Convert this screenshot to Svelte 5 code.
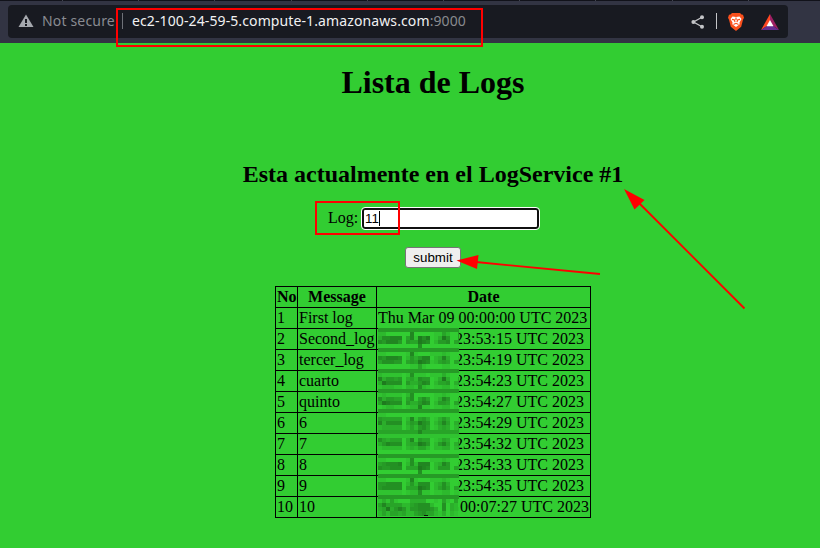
<script>
  const rows = [
    [1, 'First log', 'Thu Mar 09 00:00:00 UTC 2023', 0],
    [2, 'Second_log', '23:53:15 UTC 2023', 77],
    [3, 'tercer_log', '23:54:19 UTC 2023', 77],
    [4, 'cuarto', '23:54:23 UTC 2023', 77],
    [5, 'quinto', '23:54:27 UTC 2023', 77],
    [6, '6', '23:54:29 UTC 2023', 77],
    [7, '7', '23:54:32 UTC 2023', 77],
    [8, '8', '23:54:33 UTC 2023', 77],
    [9, '9', '23:54:35 UTC 2023', 77],
    [10, '10', '00:07:27 UTC 2023', 82]
  ];

  // Shade of every 4px cell in the censored area: 0 is the page green, 9 the darkest.
  const band = '555555555555555555555';
  const a = [band, '220000007000001142005', '366777047186801385005', '657775054487602556045', '000000000060000000000'];
  const b = [band, '110000017100011121000', '657776025357702373001', '466655045487612454044', '000000001141000011000'];
  const c = [band, '211111016111011131000', '735545034265501383004', '386666053357602445035', '122211022162101122010'];
  const blocks = [
    [328, a],
    [348, b],
    [369, c],
    [389, [band, '121111026000001121000', '635544046046401375004', '487666053357602554045', '012211012271101122010']],
    [409, [band, '110000000000000000000', '544444027145301353001', '736666035486502474034', '233333024256401343024']],
    [430, ['444444444474444444444', '111111111111111111111', '643444037154401243004', '357666034487502574035', '122222023244202233023', '000000000000000000000']],
    [454, [band, '110000016000011121000', '456667026277702375002', '655666044487602555044', '000000000060000000000']],
    [474, [band, '110000017100011121000', '556666025266602363001', '566666044487602464044', '111111012261101122011']],
    [495, [band, '131410003333001041040', '474444224566620060320', '348357525566653060321', '242443422456442130210']]
  ];
  const cells = blocks.flatMap(([y, lines]) =>
    lines.flatMap((line, r) => [...line].map((v, i) => ({ x: i * 4, y: y - 328 + r * 4, v: +v })))
  );
  const shade = (v) => `rgb(${50 - v * 2.5},${205 - v * 10.2},${50 - v * 2.5})`;
</script>

<div class="screen">
  <header>
    <div class="tabs"><i></i><i></i><i></i><i></i><i></i><i></i><i></i><i></i><i></i><i></i></div>
    <div class="address">
      <svg class="warn" width="16" height="14" viewBox="0 0 16 14">
        <path d="M8 .5 15.5 13H.5Z" fill="#a5a8ae" />
        <path d="M7 5h2v4H7zM7 10h2v2H7z" fill="#181a21" />
      </svg>
      <span class="insecure">Not secure</span>
      <span class="divider"></span>
      <span class="url">ec2-100-24-59-5.compute-1.amazonaws.com<b>:9000</b></span>
      <svg class="share" width="14" height="14" viewBox="0 0 14 14">
        <path d="M11 2.2 2.5 7 11 11.8" fill="none" stroke="#c4c5c8" stroke-width="1.3" />
        <g fill="#c4c5c8"><circle cx="11" cy="2.3" r="2" /><circle cx="2.4" cy="7" r="2" /><circle cx="11" cy="11.7" r="2" /></g>
      </svg>
      <span class="divider light"></span>
      <svg class="brave" width="16" height="18" viewBox="0 0 16 18">
        <path d="M4 0h8l1.5 1.6L15 1.8l1 3-1 2-1.8 7L8 18l-5.2-4.2L1 6.8l-1-2 1-3 1.5-.2Z" fill="#f9501d" />
        <path d="M4.500 3.500 8 4l3.500-.5L13.500 6l-2 3.500.2 1.800L8 14l-3.700-2.700.2-1.800L2.500 6Z" fill="#fff" />
        <path d="m4 6.300 2.500.7.5 2M12 6.300 9.500 7 9 9M8 4.500v2.500M5.500 11.500 8 10.300l2.500 1.200" fill="none" stroke="#f9501d" stroke-width="1.2" />
      </svg>
      <svg class="bat" width="18" height="16" viewBox="0 0 18 16">
        <path d="M9 0 0 16 9 10Z" fill="#ff4724" />
        <path d="M9 0 18 16 9 10Z" fill="#9e1f63" />
        <path d="M0 16h18L9 10Z" fill="#662d91" />
        <path d="m9 6 3.500 6.300h-7Z" fill="#fff" />
      </svg>
    </div>
  </header>

  <main>
    <h1>Lista de Logs</h1>
    <br />
    <h2>Esta actualmente en el LogService #1</h2>
    <form onsubmit={(e) => e.preventDefault()}>
      <div class="field">
        <label for="log">Log:</label>
        <div class="input" id="log" role="textbox" tabindex="-1">11<i></i></div>
      </div>
      <button>submit</button>
    </form>
    <table>
      <colgroup><col class="no" /><col class="msg" /><col class="date" /></colgroup>
      <thead><tr><th>No</th><th>Message</th><th>Date</th></tr></thead>
      <tbody>
        {#each rows as [n, message, date, indent]}
          <tr><td>{n}</td><td>{message}</td><td><span style="padding-left:{indent}px">{date}</span></td></tr>
        {/each}
      </tbody>
    </table>
  </main>

  <svg class="censor" width="81" height="188" shape-rendering="crispEdges">
    {#each cells as p}
      <rect x={p.x} y={p.y} width="4" height="5" fill={shade(p.v)} />
    {/each}
    <rect x="46" y="187" width="4" height="1" fill="#061906" />
  </svg>

  <svg class="marks" width="820" height="548" viewBox="0 0 820 548">
    <g fill="none" stroke="#f00" stroke-width="2">
      <rect x="117" y="9" width="365" height="37" />
      <rect x="316" y="202" width="83" height="32" />
      <path d="M600 274 476 262M744.5 308.5 639 203" stroke-width="1.8" />
    </g>
    <path d="M456.5 260.5 478.5 255 477 269ZM624 189 644.5 200 634.5 209.5Z" fill="#f00" />
  </svg>
</div>

<style>
  :global(body) { margin: 0; overflow: hidden; }
  .screen {
    position: relative;
    width: 820px;
    height: 548px;
    overflow: hidden;
    background: #32cd32;
    color: #000;
    font: 16px/18px "Liberation Serif", serif;
  }
  header { height: 43px; background: #323443; }
  .tabs { height: 1px; display: flex; gap: 75.2px; padding-left: 62px; background: #11121a; }
  .tabs i { width: 1px; background: #41434f; flex: none; }
  .address {
    display: flex;
    align-items: center;
    width: 780px;
    height: 33px;
    margin: 4px 0 0 8px;
    border-radius: 4px;
    background: #181a21;
    font: 14px/20px "Noto Sans", sans-serif;
    box-sizing: border-box;
    padding-left: 10px;
  }
  svg { display: block; flex: none; }
  .warn { margin-bottom: 1px; }
  .insecure { width: 80px; margin: 0 0 2px 8px; color: #898b91; white-space: nowrap; letter-spacing: .17px; }
  .divider { width: 1px; height: 16px; background: #6f7178; margin-bottom: 1px; }
  .url { width: 556px; margin: 0 0 2px 9px; color: #f1f1f2; white-space: nowrap; letter-spacing: .11px; }
  .url b { font-weight: 400; color: #888a8f; }
  .share { margin-left: 3px; }
  .divider.light { margin-left: 11px; background: #c4c5c8; }
  .brave { margin-left: 11px; }
  .bat { margin-left: 17px; }

  main { width: 866px; display: flow-root; text-align: center; }
  h1 { font-size: 32px; line-height: 37px; margin: 21px 0 22px; }
  h2 { font-size: 24px; line-height: 27px; margin: 20px 0; }
  br { line-height: 18px; }
  form { display: flex; flex-direction: column; align-items: center; }
  .field { display: flex; align-items: center; gap: 4px; height: 21px; padding-left: 1px; }
  .field label { margin-top: -1px; }
  .input {
    display: flex;
    align-items: center;
    width: 177px;
    height: 21px;
    box-sizing: border-box;
    padding-left: 1px;
    border: 2px solid #101010;
    border-radius: 3px;
    outline: 1px solid #fff;
    background: #fff;
    font: 13.333px/15px "Liberation Sans", sans-serif;
  }
  .input i { width: 1px; height: 15px; background: #000; }
  button {
    width: 56px;
    height: 21px;
    margin: 18px 0;
    padding: 0;
    border: 1px solid #767676;
    border-radius: 3px;
    background: #efefef;
    color: #000;
    font: 13.333px/15px "Liberation Sans", sans-serif;
  }
  table { width: 316px; margin: 0 auto; table-layout: fixed; border-collapse: collapse; text-align: left; }
  th, td { height: 18px; padding: 1px; border: 1px solid #000; white-space: nowrap; }
  th { text-align: center; }
  .no { width: 22px; }
  .msg { width: 79px; }
  .date { width: 214px; }
  .censor { position: absolute; left: 378px; top: 328px; }
  .marks { position: absolute; left: 0; top: 0; }
</style>
